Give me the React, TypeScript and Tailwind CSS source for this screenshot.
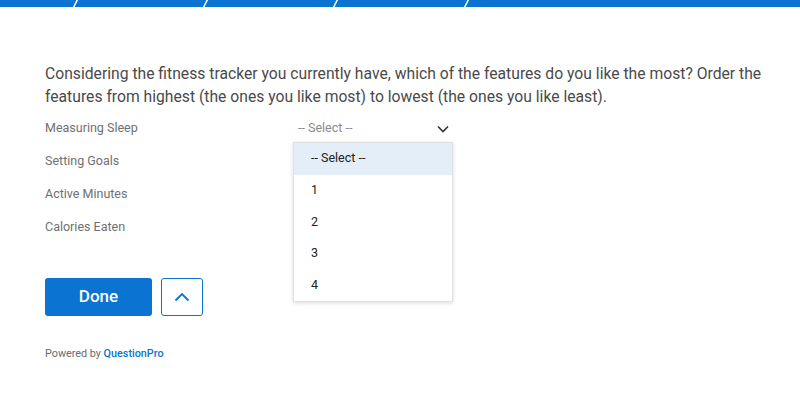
import React from "react";

const ff = { fontFamily: 'Roboto, "Noto Sans", sans-serif' };

function TopBar() {
  const slashes = [75, 205, 335, 466];
  return (
    <svg width="800" height="7" viewBox="0 0 800 7" className="block">
      <rect x="0" y="0" width="800" height="7" fill="#0b74d2" />
      {slashes.map((x) => (
        <line key={x} x1={x + 2.5} y1={-0.5} x2={x - 1.5} y2={7.5} stroke="#ffffff" strokeWidth="1.4" />
      ))}
    </svg>
  );
}

export default function App() {
  const labels = ["Measuring Sleep", "Setting Goals", "Active Minutes", "Calories Eaten"];
  return (
    <div className="w-[800px] h-[395px] bg-white overflow-hidden" style={ff}>
      <TopBar />
      <div className="pl-[45px] pt-[55px]">
        <p className="text-[15.7px] leading-[23px] text-[#4a4a4a] w-[725px]">
          Considering the fitness tracker you currently have, which of the features do you like the most? Order the features from highest (the ones you like most) to lowest (the ones you like least).
        </p>
        <div className="relative mt-[4px]">
          <div className="flex flex-col">
            {labels.map((l, i) => (
              <div key={l} className="h-[33px] flex items-center">
                <span className="w-[253px] text-[12.5px] text-[#707070]">{l}</span>
                {i === 0 && (
                  <div className="w-[152px] flex items-center justify-between">
                    <span className="text-[12.5px] text-[#8a8a8a]">-- Select --</span>
                    <svg width="12" height="8" viewBox="0 0 12 8" className="mr-[1px]">
                      <path d="M1 1.5 L6 6.5 L11 1.5" fill="none" stroke="#333" strokeWidth="1.6" />
                    </svg>
                  </div>
                )}
              </div>
            ))}
          </div>
          <div className="absolute left-[248px] top-[30px] w-[160px] bg-white border border-[#e2e2e2] shadow-[0_1px_4px_rgba(0,0,0,0.15)] text-[12.5px] text-[#222]">
            <div className="h-[31.6px] flex items-center pl-[17px] bg-[#e4eef8]">-- Select --</div>
            {["1", "2", "3", "4"].map((n) => (
              <div key={n} className="h-[31.6px] flex items-center pl-[17px]">{n}</div>
            ))}
          </div>
        </div>
        <div className="flex gap-[9px] mt-[34px]">
          <button className="w-[107px] h-[38px] rounded-[3px] bg-[#0b74d2] text-white text-[17px] font-medium">Done</button>
          <button className="w-[42px] h-[38px] rounded-[3px] border border-[#0b74d2] bg-white flex items-center justify-center">
            <svg width="16" height="10" viewBox="0 0 16 10">
              <path d="M1.5 8.5 L8 2 L14.5 8.5" fill="none" stroke="#0b74d2" strokeWidth="1.8" />
            </svg>
          </button>
        </div>
        <div className="mt-[30px] text-[10.8px] text-[#6b6b6b]">
          Powered by <span className="text-[#0b74d2] font-medium">QuestionPro</span>
        </div>
      </div>
    </div>
  );
}
